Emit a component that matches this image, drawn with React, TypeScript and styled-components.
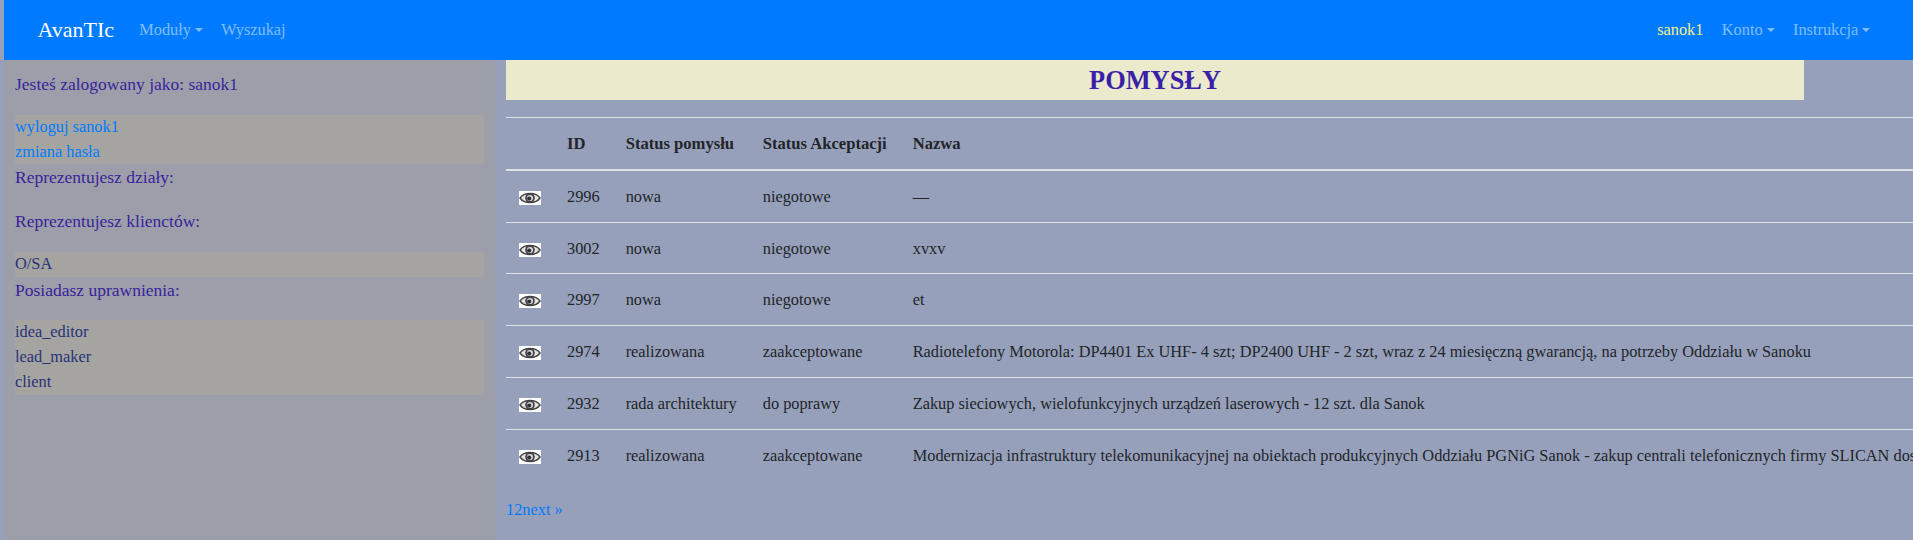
import React from "react";
import styled, { createGlobalStyle } from "styled-components";

const Global = createGlobalStyle`
  html, body { margin: 0; padding: 0; height: 100%; overflow: hidden; }
  body {
    background: #97a0ba;
    font-family: "Liberation Serif", "Times New Roman", serif;
    font-size: 16.33px;
    line-height: 24.75px;
    color: #212529;
  }
  #root { height: 100%; }
`;

const Page = styled.div`
  height: 540px;
  width: 1913px;
  padding-left: 4px;
  box-sizing: border-box;
  overflow: hidden;
`;

const Navbar = styled.nav`
  height: 60px;
  background: #007bff;
  display: flex;
  align-items: center;
  padding: 0 16px 0 33.5px;
`;

const Brand = styled.a`
  color: #fff;
  font-size: 22px;
  margin-right: 16px;
`;

const NavGroup = styled.div<{ $right?: boolean }>`
  display: flex;
  align-items: center;
  margin-left: ${(p) => (p.$right ? "auto" : "0")};
  margin-right: ${(p) => (p.$right ? "17.5px" : "0")};
`;

const NavLink = styled.a<{ $active?: boolean; $caret?: boolean }>`
  color: ${(p) => (p.$active ? "#f5ef8a" : "rgba(255,255,255,.5)")};
  padding: 0 9.2px;
  display: flex;
  align-items: center;
  ${(p) =>
    p.$caret
      ? `&::after {
    content: "";
    display: inline-block;
    margin-left: 4px;
    border-top: 4.4px solid currentColor;
    border-left: 4px solid transparent;
    border-right: 4px solid transparent;
  }`
      : ""}
`;

const Main = styled.div`
  display: flex;
  height: 480px;
`;

const Sidebar = styled.aside`
  width: 491px;
  flex: none;
  background: #9c9fa9;
  padding: 11px 11px 0;
  box-sizing: border-box;
  color: #3a1f9c;
`;

const SideLabel = styled.p`
  margin: 0 0 17.5px;
  font-size: 17.5px;
  line-height: 26.25px;
`;

const SideList = styled.div`
  background: #a5a4a1;
  color: #27337a;
  & > * {
    display: block;
  }
`;

const SideLink = styled.a`
  color: #007bff;
`;

const Content = styled.main`
  flex: 1;
  min-width: 0;
  padding-left: 11px;
  overflow: hidden;
`;

const TitleBar = styled.h2`
  margin: 0;
  width: 1298px;
  height: 40px;
  background: #ebeacc;
  color: #3a1fa8;
  font-size: 26.4px;
  line-height: 40px;
  font-weight: 700;
  text-align: center;
`;

const Table = styled.table`
  margin-top: 17px;
  border-collapse: collapse;
  min-width: 1407px;
  white-space: nowrap;
`;

const Th = styled.th`
  padding: 14px 13px 12px;
  text-align: left;
  font-weight: 700;
  font-size: 16.6px;
  border-top: 1px solid #dee2e6;
  border-bottom: 2px solid #dee2e6;
  vertical-align: bottom;
`;

const Td = styled.td`
  padding: 14px 13px 12px;
  border-top: 1px solid #dee2e6;
  vertical-align: top;
`;

const Row = styled.tr`
  &:first-child td { border-top: none; }
`;

const EyeBox = styled.svg`
  display: block;
  margin-top: 6px;
`;

const Pagination = styled.div`
  margin-top: 18px;
  color: #007bff;
`;

const Eye = () => (
  <EyeBox width="22" height="14" viewBox="0 0 22 14">
    <rect width="22" height="14" fill="#fff" />
    <path d="M1 7 C5 1 17 1 21 7 C17 13 5 13 1 7 Z" fill="#e4e4e4" stroke="#444" strokeWidth="1.4" />
    <circle cx="11" cy="7" r="4.8" fill="#444" />
    <circle cx="11" cy="7" r="3.1" fill="#d4d4d4" />
    <circle cx="10.2" cy="7.6" r="2.1" fill="#333" />
  </EyeBox>
);

const rows = [
  ["2996", "nowa", "niegotowe", "—"],
  ["3002", "nowa", "niegotowe", "xvxv"],
  ["2997", "nowa", "niegotowe", "et"],
  ["2974", "realizowana", "zaakceptowane", "Radiotelefony Motorola: DP4401 Ex UHF- 4 szt; DP2400 UHF - 2 szt, wraz z 24 miesięczną gwarancją, na potrzeby Oddziału w Sanoku"],
  ["2932", "rada architektury", "do poprawy", "Zakup sieciowych, wielofunkcyjnych urządzeń laserowych - 12 szt. dla Sanok"],
  ["2913", "realizowana", "zaakceptowane", "Modernizacja infrastruktury telekomunikacyjnej na obiektach produkcyjnych Oddziału PGNiG Sanok - zakup centrali telefonicznych firmy SLICAN dostawa"],
];

export default function App() {
  return (
    <Page>
      <Global />
      <Navbar>
        <Brand>AvanTIc</Brand>
        <NavGroup>
          <NavLink $caret>Moduły</NavLink>
          <NavLink>Wyszukaj</NavLink>
        </NavGroup>
        <NavGroup $right>
          <NavLink $active>sanok1</NavLink>
          <NavLink $caret>Konto</NavLink>
          <NavLink $caret>Instrukcja</NavLink>
        </NavGroup>
      </Navbar>
      <Main>
        <Sidebar>
          <SideLabel>Jesteś zalogowany jako: sanok1</SideLabel>
          <SideList>
            <SideLink>wyloguj sanok1</SideLink>
            <SideLink>zmiana hasła</SideLink>
          </SideList>
          <SideLabel>Reprezentujesz działy:</SideLabel>
          <SideLabel>Reprezentujesz klienctów:</SideLabel>
          <SideList>
            <span>O/SA</span>
          </SideList>
          <SideLabel>Posiadasz uprawnienia:</SideLabel>
          <SideList>
            <span>idea_editor</span>
            <span>lead_maker</span>
            <span>client</span>
          </SideList>
        </Sidebar>
        <Content>
          <TitleBar>POMYSŁY</TitleBar>
          <Table>
            <thead>
              <tr>
                <Th></Th>
                <Th>ID</Th>
                <Th>Status pomysłu</Th>
                <Th>Status Akceptacji</Th>
                <Th>Nazwa</Th>
              </tr>
            </thead>
            <tbody>
              {rows.map((r) => (
                <Row key={r[0]}>
                  <Td><Eye /></Td>
                  {r.map((c, i) => (
                    <Td key={i}>{c}</Td>
                  ))}
                </Row>
              ))}
            </tbody>
          </Table>
          <Pagination>12next »</Pagination>
        </Content>
      </Main>
    </Page>
  );
}
